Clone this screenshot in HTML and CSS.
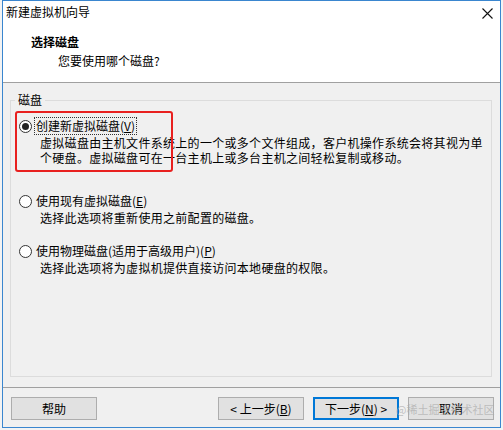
FILE: index.html
```html
<!DOCTYPE html>
<html lang="zh-CN">
<head>
<meta charset="utf-8">
<title>新建虚拟机向导</title>
<link rel="stylesheet" href="styles.css">
</head>
<body>
<div class="window">
  <div class="top">
    <div class="titlebar">新建虚拟机向导</div>
    <svg class="close" width="11" height="11" viewBox="0 0 11 11"><path d="M0.5 0.5 L10.5 10.5 M10.5 0.5 L0.5 10.5" stroke="#111" stroke-width="1.1" fill="none"/></svg>
    <div class="heading">选择磁盘</div>
    <div class="subheading">您要使用哪个磁盘?</div>
  </div>
  <div class="body">
    <div class="group">
      <span class="legend">磁盘</span>
      <div class="highlight"></div>
      <div class="option">
        <div class="radio-row">
          <span class="radio checked"></span>
          <span class="label focus">创建新虚拟磁盘(<u>V</u>)</span>
        </div>
        <div class="desc">虚拟磁盘由主机文件系统上的一个或多个文件组成，客户机操作系统会将其视为单<br>个硬盘。虚拟磁盘可在一台主机上或多台主机之间轻松复制或移动。</div>
      </div>
      <div class="option second">
        <div class="radio-row">
          <span class="radio"></span>
          <span class="label">使用现有虚拟磁盘(<u>E</u>)</span>
        </div>
        <div class="desc">选择此选项将重新使用之前配置的磁盘。</div>
      </div>
      <div class="option third">
        <div class="radio-row">
          <span class="radio"></span>
          <span class="label">使用物理磁盘(适用于高级用户)(<u>P</u>)</span>
        </div>
        <div class="desc">选择此选项将为虚拟机提供直接访问本地硬盘的权限。</div>
      </div>
    </div>
  </div>
  <div class="footer">
    <button class="btn">帮助</button>
    <div class="spacer"></div>
    <button class="btn">&lt; 上一步(<u>B</u>)</button>
    <button class="btn default">下一步(<u>N</u>) &gt;</button>
    <button class="btn">取消</button>
  </div>
  <div class="watermark">@稀土掘金技术社区</div>
</div>
</body>
</html>
```

FILE: styles.css
```css
* { box-sizing: border-box; }
html, body {
  margin: 0;
  padding: 0;
  background: #f3f3f3;
}
body {
  font-family: "Noto Sans CJK SC", "Noto Sans", sans-serif;
  font-size: 12px;
  color: #000;
  width: 503px;
  height: 430px;
  overflow: hidden;
}
.window {
  position: relative;
  margin-left: 2px;
  width: 499px;
  height: 428px;
  border: 1px solid #3a86cf;
  background: #f0f0f0;
  display: flex;
  flex-direction: column;
}
.top {
  background: #fff;
  height: 82px;
  border-bottom: 1px solid #a0a0a0;
  flex: none;
}
.titlebar {
  height: 22px;
  line-height: 22px;
  padding-left: 3px;
}
.close {
  position: absolute;
  left: 479px;
  top: 7px;
}
.heading {
  margin-top: 11px;
  padding-left: 28px;
  line-height: 16px;
  font-weight: bold;
}
.subheading {
  margin-top: 3px;
  padding-left: 55px;
  line-height: 16px;
}
.body {
  height: 304px;
  flex: none;
  padding-top: 17px;
  padding-left: 7px;
  padding-right: 8px;
}
.group {
  position: relative;
  border: 1px solid #dcdcdc;
  height: 277px;
  padding-top: 16px;
  padding-left: 8px;
}
.legend {
  position: absolute;
  left: 4px;
  top: -9px;
  padding: 0 3px;
  background: #f0f0f0;
  line-height: 16px;
}
.highlight {
  position: absolute;
  left: 4px;
  top: 10px;
  width: 158px;
  height: 61px;
  border: 2px solid #e8201f;
  border-radius: 3px;
}
.radio-row {
  display: flex;
  align-items: center;
  height: 18px;
}
.radio {
  width: 13px;
  height: 13px;
  border: 1px solid #333;
  border-radius: 50%;
  background: #fff;
  margin-right: 2px;
  flex: none;
  display: flex;
  align-items: center;
  justify-content: center;
}
.radio.checked::after {
  content: "";
  width: 7px;
  height: 7px;
  border-radius: 50%;
  background: #222;
}
.label {
  border: 1px dotted transparent;
  padding: 0 1px;
  line-height: 16px;
}
.label.focus {
  border-color: #333;
}
.desc {
  margin-left: 21px;
  line-height: 15px;
  letter-spacing: 0.3px;
}
.option.second { margin-top: 27px; }
.option.third { margin-top: 17px; }
.footer {
  flex: 1;
  border-top: 1px solid #a0a0a0;
  display: flex;
  align-items: flex-start;
  padding-top: 9px;
  padding-left: 8px;
  padding-right: 6px;
}
.spacer { flex: 1; }
.btn {
  font-family: inherit;
  font-size: 12px;
  color: #000;
  width: 86px;
  height: 23px;
  padding: 0;
  background: #e1e1e1;
  border: 1px solid #adadad;
  line-height: 20px;
  margin-left: 9px;
}
.btn:first-child { margin-left: 0; }
.btn.default {
  border: 2px solid #0078d7;
}
.watermark {
  position: absolute;
  left: 393px;
  top: 400px;
  font-size: 11px;
  line-height: 16px;
  white-space: nowrap;
  color: rgba(170, 170, 170, 0.7);
  pointer-events: none;
}
```
